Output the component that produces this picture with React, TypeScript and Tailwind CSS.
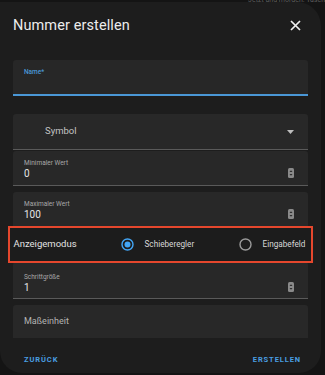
import React from "react";

const Spinner = () => (
  <svg width="6" height="10" viewBox="0 0 6 10" className="shrink-0">
    <rect x="0" y="0" width="6" height="10" rx="1.5" fill="#8a8a8a" />
    <path d="M1.5 4 L3 2.3 L4.5 4 Z" fill="#2a2a2a" />
    <path d="M1.5 6 L3 7.7 L4.5 6 Z" fill="#2a2a2a" />
  </svg>
);

const NumField = ({ label, value, cls }: { label: string; value: string; cls: string }) => (
  <div className={`${cls} bg-[#282828] rounded-t-[3px] border-b-[1.5px] border-[#5a5a5a] flex items-end pl-[11px] pr-[14px]`}>
    <div className="flex-1 flex flex-col">
      <span className="text-[6.5px] leading-[8px] text-[#a8a8a8]">{label}</span>
      <span className="text-[10px] leading-[13px] text-[#e6e6e6] mt-[0.5px]">{value}</span>
    </div>
    <div className="mb-[2px]"><Spinner /></div>
  </div>
);

const Radio = ({ checked }: { checked: boolean }) => (
  <svg width="13" height="13" viewBox="0 0 13 13" className="shrink-0">
    <circle cx="6.5" cy="6.5" r="5.5" fill="none" stroke={checked ? "#42a5f5" : "#9a9a9a"} strokeWidth="1.4" />
    {checked && <circle cx="6.5" cy="6.5" r="3" fill="#42a5f5" />}
  </svg>
);

export default function App() {
  return (
    <div className="w-[325px] h-[375px] bg-[#141414] overflow-hidden relative" style={{ fontFamily: "Roboto, 'Liberation Sans', sans-serif" }}>
      <div className="absolute top-0 right-0 h-[3px] overflow-hidden">
        <div className="-mt-[4px] text-[7px] leading-[8px] text-[#5e5e5e] whitespace-nowrap">Jetzt und morgen. Tasch</div>
      </div>
      <div className="absolute left-0 top-[2px] w-[321px] h-[371px] bg-[#1d1d1d] rounded-tr-[24px] rounded-b-[22px] flex flex-col px-[13px]">
        <div className="flex items-center justify-between h-[46px] pt-[1px]">
          <span className="text-[14.5px] text-[#ececec] tracking-[0.1px]">Nummer erstellen</span>
          <svg width="11" height="11" viewBox="0 0 11 11" className="mr-[7px]">
            <path d="M1 1 L10 10 M10 1 L1 10" stroke="#f0f0f0" strokeWidth="1.7" />
          </svg>
        </div>
        {/* Name */}
        <div className="mt-[12px] h-[36px] bg-[#272727] rounded-t-[3px] border-b-[2px] border-[#4a97d6] pl-[11px] pt-[8px]">
          <span className="block text-[6.5px] leading-[8px] font-medium text-[#4a97d6]">Name*</span>
        </div>
        {/* Symbol */}
        <div className="mt-[18px] h-[36px] bg-[#282828] rounded-t-[3px] border-b-[1.5px] border-[#5a5a5a] flex items-center pl-[32px] pr-[14px]">
          <span className="flex-1 text-[9.5px] text-[#c4c4c4]">Symbol</span>
          <svg width="7" height="4" viewBox="0 0 7 4"><path d="M0 0 L7 0 L3.5 4 Z" fill="#bdbdbd" /></svg>
        </div>
        <NumField label="Minimaler Wert" value="0" cls="mt-[1px] h-[35px] pb-[5px]" />
        <NumField label="Maximaler Wert" value="100" cls="mt-[6px] h-[35px] pb-[5px]" />
        {/* Anzeigemodus */}
        <div className="-mx-[5px] -mt-[1px] h-[37px] border-2 border-[#e5472d] bg-[#1c1c1c] flex items-center pl-[3.5px] relative z-10">
          <span className="w-[107px] text-[9.5px] text-[#e2e2e2]">Anzeigemodus</span>
          <Radio checked />
          <span className="ml-[11px] w-[94px] text-[8.2px] text-[#d8d8d8]">Schieberegler</span>
          <Radio checked={false} />
          <span className="ml-[11px] text-[8.2px] text-[#d8d8d8]">Eingabefeld</span>
        </div>
        <NumField label="Schrittgröße" value="1" cls="-mt-[1px] h-[37px] pb-[4px]" />
        {/* Maßeinheit */}
        <div className="mt-[6px] h-[33px] bg-[#282828] rounded-t-[3px] flex items-center pl-[11px]">
          <span className="text-[9px] text-[#b4b4b4]">Maßeinheit</span>
        </div>
        <div className="flex items-center justify-between mt-[16px] px-[11px] pr-[7px]">
          <span className="text-[7.5px] font-bold tracking-[0.9px] text-[#4a9fe2]">ZURÜCK</span>
          <span className="text-[7.5px] font-bold tracking-[0.9px] text-[#4a9fe2]">ERSTELLEN</span>
        </div>
      </div>
    </div>
  );
}
